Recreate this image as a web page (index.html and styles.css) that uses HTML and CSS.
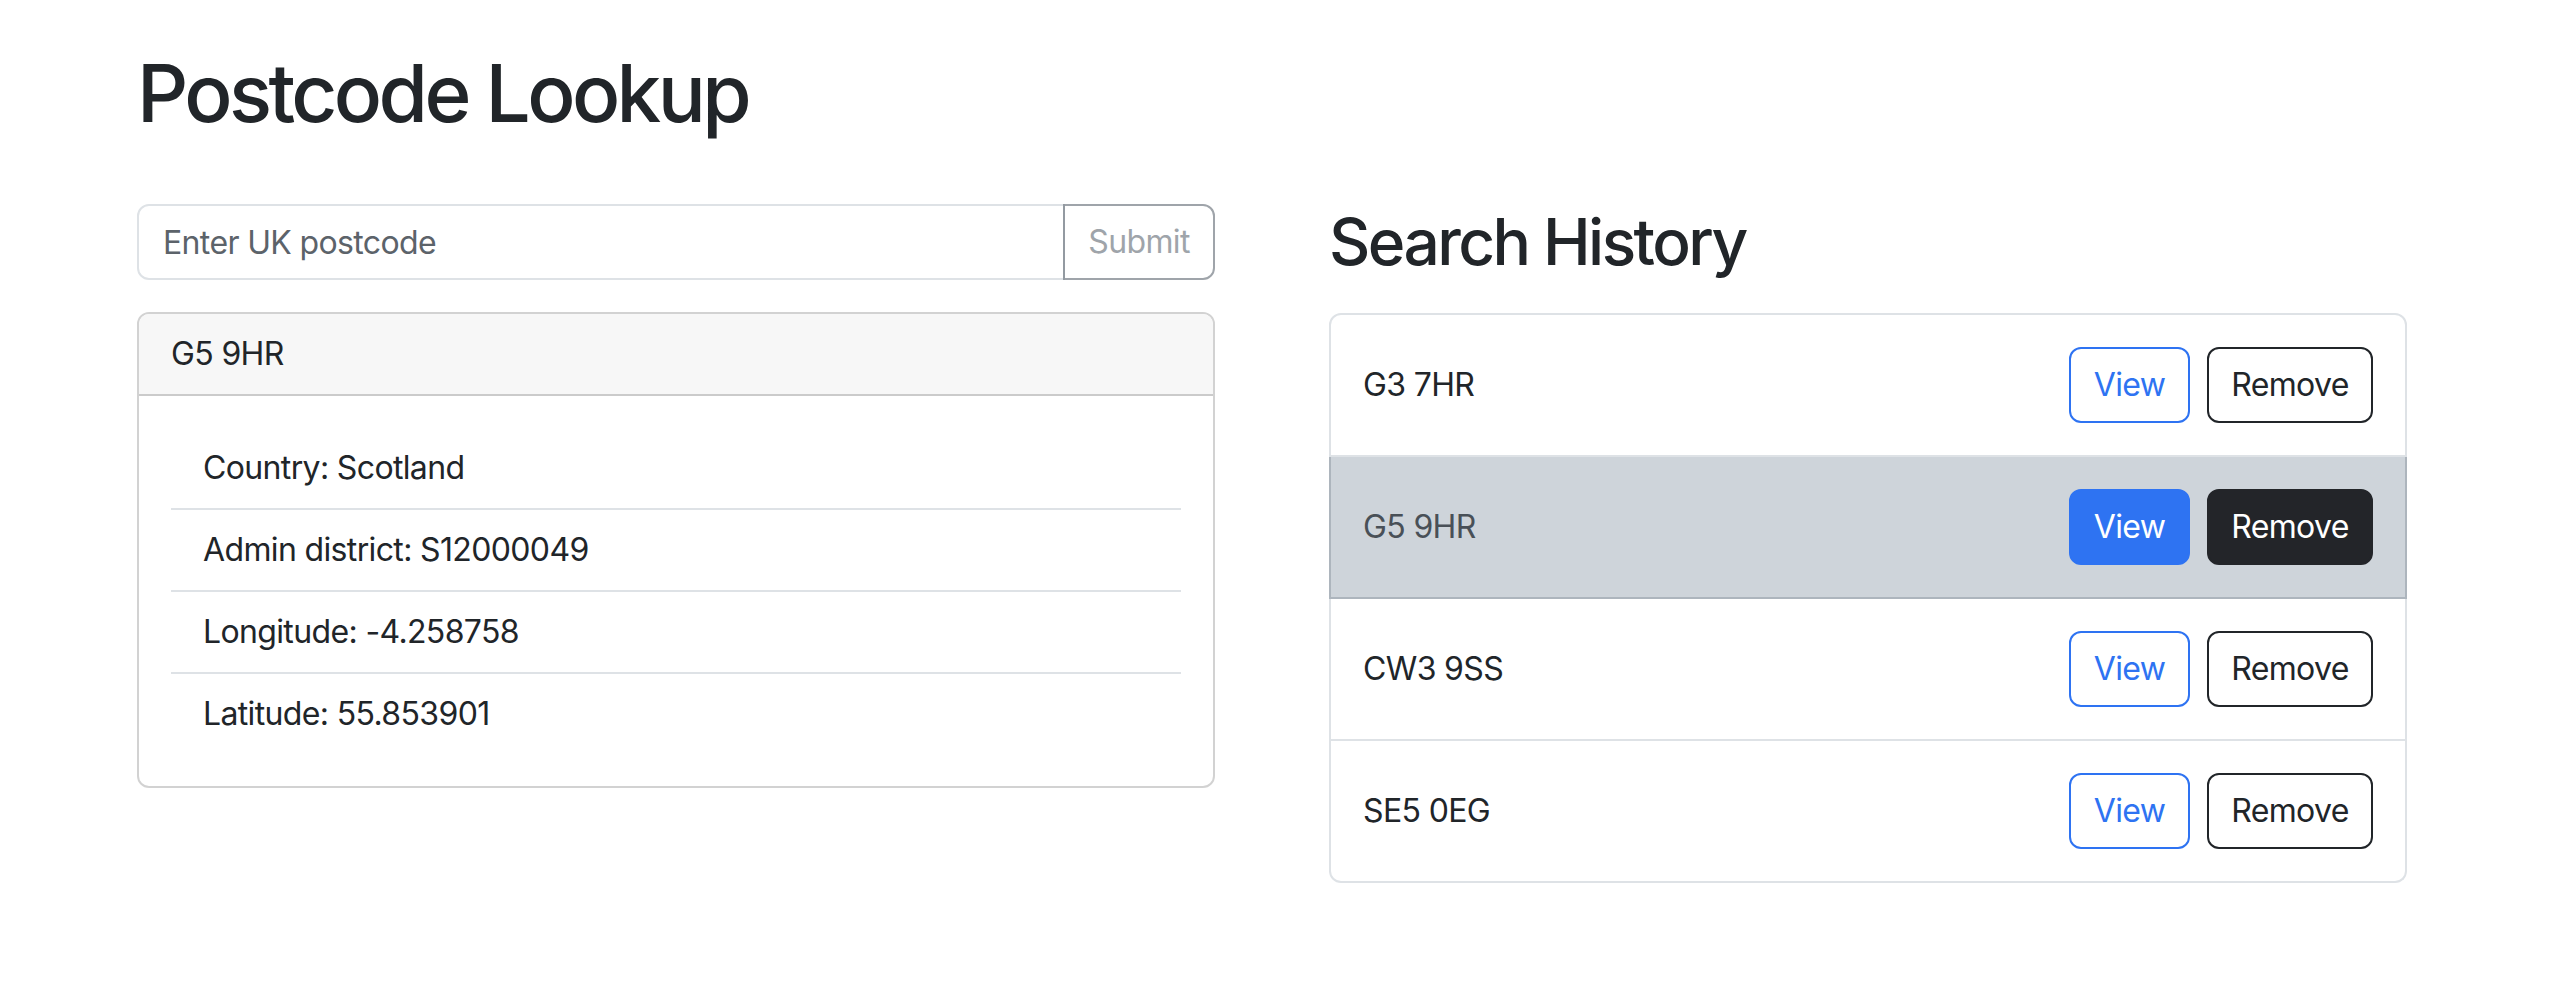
FILE: index.html
```html
<!DOCTYPE html>
<html lang="en">
<head>
<meta charset="utf-8">
<title>Postcode Lookup</title>
<link rel="stylesheet" href="styles.css">
</head>
<body>
<div class="page">
  <h1 class="title">Postcode Lookup</h1>
  <div class="row">
    <div class="col">
      <form class="input-group">
        <input class="form-control" type="text" placeholder="Enter UK postcode">
        <button class="btn-submit" type="button" disabled>Submit</button>
      </form>
      <div class="card">
        <div class="card-header">G5 9HR</div>
        <div class="card-body">
          <ul class="detail-list">
            <li class="detail-item">Country: Scotland</li>
            <li class="detail-item">Admin district: S12000049</li>
            <li class="detail-item">Longitude: -4.258758</li>
            <li class="detail-item">Latitude: 55.853901</li>
          </ul>
        </div>
      </div>
    </div>
    <div class="col">
      <h2 class="subtitle">Search History</h2>
      <ul class="history">
        <li class="history-item">
          <span class="code">G3 7HR</span>
          <span class="actions"><button class="btn btn-view">View</button><button class="btn btn-remove">Remove</button></span>
        </li>
        <li class="history-item is-current">
          <span class="code">G5 9HR</span>
          <span class="actions"><button class="btn btn-view">View</button><button class="btn btn-remove">Remove</button></span>
        </li>
        <li class="history-item">
          <span class="code">CW3 9SS</span>
          <span class="actions"><button class="btn btn-view">View</button><button class="btn btn-remove">Remove</button></span>
        </li>
        <li class="history-item">
          <span class="code">SE5 0EG</span>
          <span class="actions"><button class="btn btn-view">View</button><button class="btn btn-remove">Remove</button></span>
        </li>
      </ul>
    </div>
  </div>
</div>
</body>
</html>
```
FILE: styles.css
```css
* { box-sizing: border-box; }

html, body {
  margin: 0;
  background: #fff;
}

body {
  font-family: Inter, "Noto Sans", "Liberation Sans", sans-serif;
  font-size: 32px;
  line-height: 1.5;
  letter-spacing: -0.02em;
  color: #212529;
}

.page {
  width: 2270px;
  margin-left: 137px;
  padding-top: 45px;
}

.title {
  margin: 0 0 63px 0;
  font-size: 80px;
  font-weight: 500;
  line-height: 1.2;
  letter-spacing: -0.045em;
}

.row {
  display: grid;
  grid-template-columns: 1078px 1078px;
  column-gap: 114px;
  align-items: start;
}

.input-group {
  display: flex;
  margin: 0 0 32px 0;
}

.form-control {
  flex: 1;
  min-width: 0;
  height: 76px;
  padding: 12px 24px;
  border: 2px solid #dee2e6;
  border-radius: 12px 0 0 12px;
  font: inherit;
  letter-spacing: -0.02em;
  color: #212529;
  background: #fff;
  outline: none;
}

.form-control::placeholder {
  color: #5c636a;
  opacity: 1;
}

.btn-submit {
  width: 152px;
  height: 76px;
  margin-left: -2px;
  padding: 12px 0;
  border: 2px solid #6c757d;
  border-radius: 0 12px 12px 0;
  background: transparent;
  color: #6c757d;
  opacity: 0.65;
  font: inherit;
  letter-spacing: -0.02em;
  text-align: center;
}

.card {
  border: 2px solid rgba(0, 0, 0, 0.175);
  border-radius: 12px;
  overflow: hidden;
}

.card-header {
  padding: 16px 32px;
  background: #f7f7f7;
  border-bottom: 2px solid rgba(0, 0, 0, 0.175);
}

.card-body {
  padding: 32px;
}

.detail-list {
  list-style: none;
  margin: 0;
  padding: 0;
}

.detail-item {
  padding: 16px 32px;
  border-bottom: 2px solid #dee2e6;
}

.detail-item:last-child {
  border-bottom: 0;
}

.subtitle {
  margin: 0 0 32px 0;
  font-size: 64px;
  font-weight: 500;
  line-height: 1.2;
  letter-spacing: -0.04em;
}

.history {
  list-style: none;
  margin: 0;
  padding: 0;
}

.history-item {
  display: flex;
  align-items: center;
  justify-content: space-between;
  padding: 32px;
  border: 2px solid #dee2e6;
  border-top-width: 0;
  background: #fff;
}

.history-item:first-child {
  border-top-width: 2px;
  border-radius: 12px 12px 0 0;
}

.history-item:last-child {
  border-radius: 0 0 12px 12px;
}

.history-item.is-current {
  background: #ced4da;
  color: #495057;
  border-color: #adb5bd;
}

.actions {
  display: flex;
  gap: 17px;
}

.btn {
  height: 76px;
  padding: 12px 0;
  border: 2px solid;
  border-radius: 12px;
  font: inherit;
  letter-spacing: -0.02em;
  text-align: center;
  background: transparent;
}

.btn-view {
  width: 121px;
  color: #2e73f2;
  border-color: #2e73f2;
}

.btn-remove {
  width: 166px;
  color: #212529;
  border-color: #212529;
}

.is-current .btn-view {
  background: #2e73f2;
  color: #fff;
}

.is-current .btn-remove {
  background: #232529;
  border-color: #232529;
  color: #fff;
}
```
